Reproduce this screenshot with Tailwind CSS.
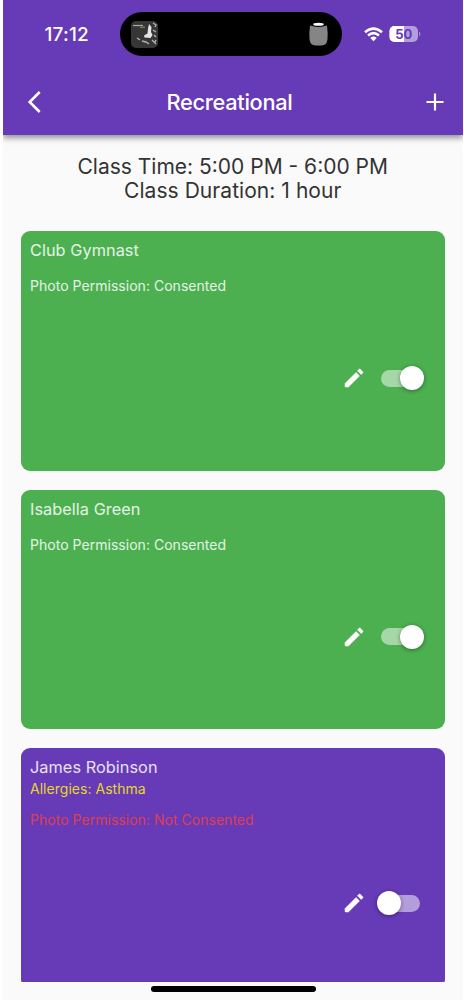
<!DOCTYPE html>
<html lang="en">
<head>
<meta charset="utf-8">
<title>Recreational</title>
<script src="https://cdn.jsdelivr.net/npm/@tailwindcss/browser@4"></script>
</head>
<body class="bg-white h-[1003px] overflow-hidden font-['Inter','Liberation_Sans',sans-serif]">
<svg class="hidden">
  <symbol id="pencil" viewBox="0 0 24 24"><path fill="#fff" stroke="#fff" stroke-width=".5" stroke-linejoin="round" d="M3 17.600V20.300Q3 21 3.700 21H6.400L17.500 9.940l-3.440-3.440L3 17.600zM20.710 7.040c.39-.39.39-1.020 0-1.410l-2.340-2.340c-.39-.39-1.020-.39-1.410 0l-1.500 1.500 3.750 3.750 1.500-1.500z"/></symbol>
</svg>
<div class="ml-[2.5px] w-[460.5px] h-[1000px] bg-[#fafafa] relative flex flex-col overflow-hidden">
  <header class="h-[134.5px] shrink-0 bg-[#673ab7] shadow-[0_3px_6px_rgba(0,0,0,0.42)] text-white">
    <div class="h-[68px] flex items-center">
      <div class="ml-[42px] w-[75px] text-[19px] font-medium tracking-[0.2px] leading-none whitespace-nowrap"><span>17:12</span></div>
      <div class="w-[222px] h-[44px] rounded-full bg-black flex items-center justify-between pl-[11px] pr-[14px]">
        <svg class="w-[27px] h-[27px] rounded-[5px]" viewBox="0 0 27 27"><defs><filter id="soft"><feGaussianBlur stdDeviation=".45"/></filter></defs><rect width="27" height="27" fill="#363636"/><g filter="url(#soft)"><path d="M2 4.500h10" stroke="#aaa" stroke-width="1.2"/><path d="M9 6.300h5" stroke="#8b8740" stroke-width="1.200"/><path d="M18 3l2.500 3-.5 5 1.500 3-2 3-6-.5-.5-2 3.500-2 .5-5z" fill="#e4e4e4"/><path d="M6 17l3 2M11 20l4 1 3 2M22 2l3 2-1 2M22 9l3 2M23 14l2 2M21 19l4 4M25 19l-1 2" fill="none" stroke="#b0b0b0" stroke-width="1.4"/></g></svg>
        <svg class="w-[19px] h-[24px]" viewBox="0 0 19 24"><path d="M1 3.500Q9.500 6 18 3.500Q19 11 18.500 17Q18 23.500 12.500 23.500H6.500Q1 23.500.5 17Q0 11 1 3.500Z" fill="#858585"/><ellipse cx="9.500" cy="2.400" rx="6.500" ry="2.400" fill="#000"/><ellipse cx="9.500" cy="2.200" rx="5.300" ry="1.500" fill="#fff"/></svg>
      </div>
      <svg class="ml-[22.5px] w-[19px] h-[15px]" viewBox="0 0 19 15"><path d="M1 5.300Q9.500-2 18 5.300M4 8.500Q9.500 3.800 15 8.500" fill="none" stroke="#fff" stroke-width="2.500"/><path d="M6.300 10.900Q9.500 8 12.700 10.900L9.500 14.200Z" fill="#fff"/></svg>
      <svg class="ml-[6px] w-[32px] h-[16px]" viewBox="0 0 32 16"><defs><clipPath id="bat"><rect x=".5" width="28.500" height="16" rx="5"/></clipPath></defs><g clip-path="url(#bat)"><rect width="29" height="16" fill="#b39ddb"/><rect width="15" height="16" fill="#fff"/></g><path d="M30 5.500q3 2.500 0 5z" fill="#a48ad3"/><text x="14.700" y="12.700" text-anchor="middle" font-size="13" font-weight="700" fill="#673ab7" class="font-['Inter',sans-serif]">50</text></svg>
    </div>
    <div class="h-[67px] flex items-center justify-between pl-[24.5px] pr-[16px]">
      <svg class="w-[16px] h-[24px]" viewBox="0 0 16 24"><path d="M12.700 2L2.700 12l10 10" fill="none" stroke="#fff" stroke-width="2.600"/></svg>
      <h1 class="pt-[2px] mr-[7px] text-[21.8px] font-medium leading-none tracking-[-0.3px] whitespace-nowrap">Recreational</h1>
      <svg class="w-[24px] h-[24px]" viewBox="0 0 24 24"><path d="M3.500 12h17M12 3.500v17" stroke="#fff" stroke-width="2.200"/></svg>
    </div>
  </header>
  <div class="pt-[20px] h-[96.500px] shrink-0 text-center text-[21px] leading-[24.500px] text-[#333]">
    <p>Class Time: 5:00 PM - 6:00 PM</p>
    <p class="tracking-[0.05px]">Class Duration: 1 hour</p>
  </div>
  <main class="h-[751px] shrink-0 overflow-hidden flex flex-col gap-[19px] pl-[18px] pr-[18.500px] text-white/85">
    <section class="h-[239.500px] shrink-0 rounded-[9px] bg-[#4caf50] pl-[9.500px] pr-[22px] pt-[9px]">
      <h2 class="text-[16.300px] tracking-[0.05px] leading-[20px]">Club Gymnast</h2>
      <p class="mt-[17px] text-[14px] tracking-[0.030px] leading-[18px]">Photo Permission: Consented</p>
      <div class="mt-[71px] h-[24px] flex items-center justify-end"><svg class="w-[24px] h-[24px] mr-[15px]"><use href="#pencil"/></svg><div class="w-[39px] h-[17px] rounded-full bg-white/50 flex items-center justify-end mr-[3px]"><i class="w-[24px] h-[24px] shrink-0 rounded-full bg-white -mr-[4px] shadow-[0_1px_4px_rgba(0,0,0,.4)]"></i></div></div>
    </section>
    <section class="h-[239.500px] shrink-0 rounded-[9px] bg-[#4caf50] pl-[9.500px] pr-[22px] pt-[9px]">
      <h2 class="text-[16.300px] tracking-[0.05px] leading-[20px]">Isabella Green</h2>
      <p class="mt-[17px] text-[14px] tracking-[0.030px] leading-[18px]">Photo Permission: Consented</p>
      <div class="mt-[71px] h-[24px] flex items-center justify-end"><svg class="w-[24px] h-[24px] mr-[15px]"><use href="#pencil"/></svg><div class="w-[39px] h-[17px] rounded-full bg-white/50 flex items-center justify-end mr-[3px]"><i class="w-[24px] h-[24px] shrink-0 rounded-full bg-white -mr-[4px] shadow-[0_1px_4px_rgba(0,0,0,.4)]"></i></div></div>
    </section>
    <section class="h-[239.500px] shrink-0 rounded-[9px] bg-[#673ab7] pl-[9.500px] pr-[22px] pt-[9px]">
      <h2 class="text-[16.300px] tracking-[0.05px] leading-[20px]">James Robinson</h2>
      <p class="mt-[3px] text-[14px] tracking-[0.030px] leading-[18px] text-[#e6d72b]">Allergies: Asthma</p>
      <p class="mt-[13px] text-[14px] tracking-[0.030px] leading-[18px] text-[#dc4050]">Photo Permission: Not Consented</p>
      <div class="mt-[62px] h-[24px] flex items-center justify-end"><svg class="w-[24px] h-[24px] mr-[15px]"><use href="#pencil"/></svg><div class="w-[39px] h-[17px] rounded-full bg-white/50 flex items-center mr-[3px]"><i class="w-[24px] h-[24px] shrink-0 rounded-full bg-white -ml-[4px] shadow-[0_1px_4px_rgba(0,0,0,.4)]"></i></div></div>
    </section>
  </main>
  <div class="absolute left-[148px] top-[985.500px] w-[165px] h-[6px] rounded-full bg-black"></div>
</div>
</body>
</html>
